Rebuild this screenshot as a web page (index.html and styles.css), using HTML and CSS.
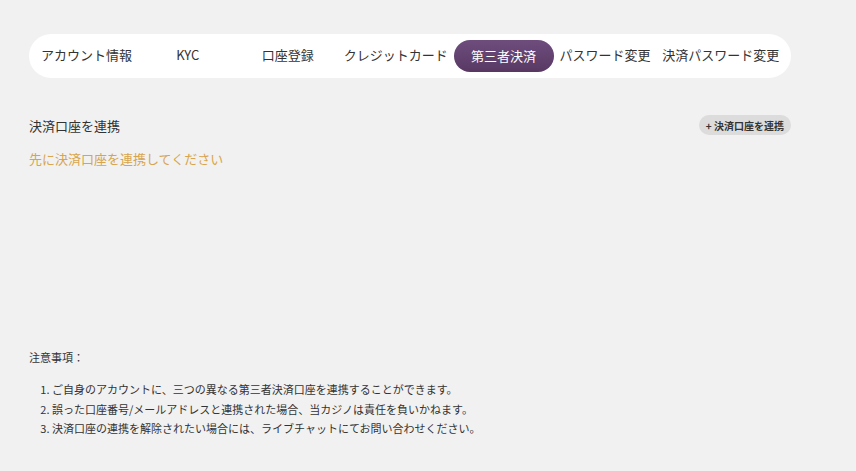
FILE: index.html
```html
<!DOCTYPE html>
<html lang="ja">
<head>
  <meta charset="UTF-8">
  <meta name="viewport" content="width=device-width, initial-scale=1.0">
  <title>第三者決済</title>
  <link rel="stylesheet" href="styles.css">
</head>
<body>
  <div class="page">
    <nav class="tabs">
      <a class="tab">アカウント情報</a>
      <a class="tab">KYC</a>
      <a class="tab">口座登録</a>
      <a class="tab">クレジットカード</a>
      <a class="tab active">第三者決済</a>
      <a class="tab">パスワード変更</a>
      <a class="tab">決済パスワード変更</a>
    </nav>

    <section class="bind">
      <div class="bind-head">
        <h2>決済口座を連携</h2>
        <button class="add-btn">+ 決済口座を連携</button>
      </div>
      <p class="warn">先に決済口座を連携してください</p>
    </section>

    <section class="notes">
      <p class="notes-title">注意事項：</p>
      <ol>
        <li>ご自身のアカウントに、三つの異なる第三者決済口座を連携することができます。</li>
        <li>誤った口座番号/メールアドレスと連携された場合、当カジノは責任を負いかねます。</li>
        <li>決済口座の連携を解除されたい場合には、ライブチャットにてお問い合わせください。</li>
      </ol>
    </section>
  </div>
</body>
</html>
```

FILE: styles.css
```css
body {
  margin: 0;
  padding: 0;
  background-color: #f1f1f1;
  font-family: "Noto Sans CJK JP", "Noto Sans", sans-serif;
  color: #333;
}

.page {
  width: 762px;
  padding: 34px 0 0 29px;
}

.tabs {
  display: flex;
  align-items: center;
  height: 44px;
  padding: 0 6px 0 6px;
  background-color: #fff;
  border-radius: 22px;
  box-sizing: border-box;
}

.tab {
  min-width: 100px;
  height: 32px;
  line-height: 30px;
  padding: 0 6px;
  box-sizing: border-box;
  text-align: center;
  font-size: 13px;
  color: #333;
  white-space: nowrap;
  cursor: pointer;
}

.tab.active {
  background: linear-gradient(#6e4d7d, #583863);
  color: #fff;
  border-radius: 16px;
  line-height: 32px;
}

.bind {
  margin-top: 37px;
}

.bind-head {
  display: flex;
  justify-content: space-between;
  align-items: center;
}

.bind-head h2 {
  margin: 0;
  font-size: 13px;
  font-weight: normal;
  color: #333;
}

.add-btn {
  height: 20px;
  padding: 0 7px;
  border: none;
  border-radius: 10px;
  background-color: #dcdcdc;
  font-family: inherit;
  font-size: 10px;
  font-weight: bold;
  color: #333;
}

.warn {
  margin: 14px 0 0;
  font-size: 13px;
  line-height: 19px;
  color: #d8a54c;
}

.notes {
  margin-top: 181px;
  font-size: 11px;
}

.notes-title {
  margin: 0;
  line-height: 16px;
}

.notes ol {
  margin: 15px 0 0;
  padding-left: 23px;
}

.notes li {
  line-height: 19.5px;
}
```
